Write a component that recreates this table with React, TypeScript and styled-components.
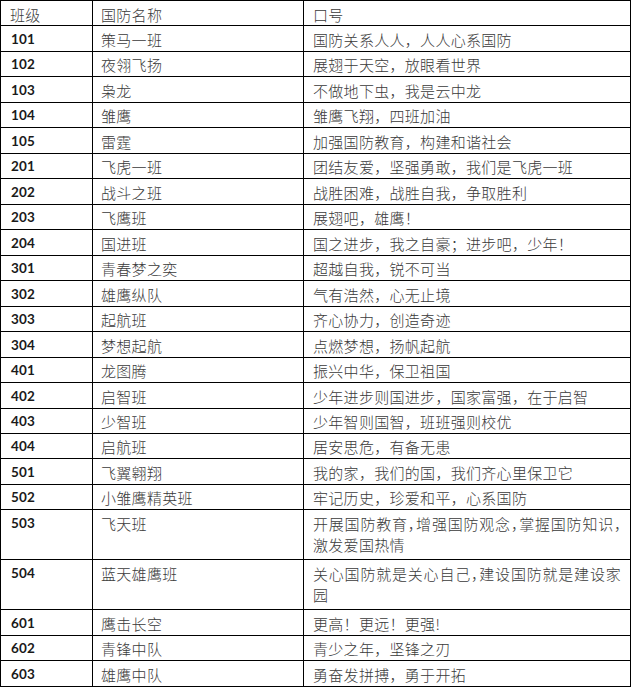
import React from "react";
import styled, { createGlobalStyle } from "styled-components";

const GlobalStyle = createGlobalStyle`
  html, body { margin: 0; padding: 0; background: #ffffff; }
  body { font-family: "Noto Sans CJK SC", sans-serif; }
`;

type Row = { id: string; name: string; slogan: string[]; tall?: boolean };

const rows: Row[] = [
  { id: "101", name: "策马一班", slogan: ["国防关系人人，人人心系国防"] },
  { id: "102", name: "夜翎飞扬", slogan: ["展翅于天空，放眼看世界"] },
  { id: "103", name: "枭龙", slogan: ["不做地下虫，我是云中龙"] },
  { id: "104", name: "雏鹰", slogan: ["雏鹰飞翔，四班加油"] },
  { id: "105", name: "雷霆", slogan: ["加强国防教育，构建和谐社会"] },
  { id: "201", name: "飞虎一班", slogan: ["团结友爱，坚强勇敢，我们是飞虎一班"] },
  { id: "202", name: "战斗之班", slogan: ["战胜困难，战胜自我，争取胜利"] },
  { id: "203", name: "飞鹰班", slogan: ["展翅吧，雄鹰！"] },
  { id: "204", name: "国进班", slogan: ["国之进步，我之自豪；进步吧，少年！"] },
  { id: "301", name: "青春梦之奕", slogan: ["超越自我，锐不可当"] },
  { id: "302", name: "雄鹰纵队", slogan: ["气有浩然，心无止境"] },
  { id: "303", name: "起航班", slogan: ["齐心协力，创造奇迹"] },
  { id: "304", name: "梦想起航", slogan: ["点燃梦想，扬帆起航"] },
  { id: "401", name: "龙图腾", slogan: ["振兴中华，保卫祖国"] },
  { id: "402", name: "启智班", slogan: ["少年进步则国进步，国家富强，在于启智"] },
  { id: "403", name: "少智班", slogan: ["少年智则国智，班班强则校优"] },
  { id: "404", name: "启航班", slogan: ["居安思危，有备无患"] },
  { id: "501", name: "飞翼翱翔", slogan: ["我的家，我们的国，我们齐心里保卫它"] },
  { id: "502", name: "小雏鹰精英班", slogan: ["牢记历史，珍爱和平，心系国防"] },
  {
    id: "503",
    name: "飞天班",
    slogan: ["开展国防教育，增强国防观念，掌握国防知识，", "激发爱国热情"],
    tall: true,
  },
  {
    id: "504",
    name: "蓝天雄鹰班",
    slogan: ["关心国防就是关心自己，建设国防就是建设家", "园"],
    tall: true,
  },
  { id: "601", name: "鹰击长空", slogan: ["更高！更远！更强!"] },
  { id: "602", name: "青锋中队", slogan: ["青少之年，坚锋之刃"] },
  { id: "603", name: "雄鹰中队", slogan: ["勇奋发拼搏，勇于开拓"] },
];

const Table = styled.table`
  border-collapse: collapse;
  table-layout: fixed;
  width: 630px;
  margin: 0;
`;

const Col = styled.col<{ $w: number }>`
  width: ${(p) => p.$w}px;
`;

const Tr = styled.tr<{ $tall?: boolean }>`
  height: ${(p) => (p.$tall ? 50 : 25.48)}px;
`;

const Cell = styled.td`
  border: 1px solid #000;
  padding: 2.5px 4px 0 9px;
  vertical-align: top;
  font-family: "Noto Sans CJK SC", sans-serif;
  font-weight: 300;
  font-size: 15px;
  line-height: 21px;
  letter-spacing: 0.3px;
  color: #3a3a3a;
  white-space: nowrap;
  overflow: hidden;
`;

const NameCell = styled(Cell)`
  padding-left: 8px;
`;

const IdCell = styled(Cell)`
  font-family: Lato, "Open Sans", sans-serif;
  font-weight: 700;
  font-size: 13.5px;
  letter-spacing: 0.2px;
  color: #1a1a1a;
  padding-left: 10px;
`;

const Line = styled.div<{ $tight?: boolean }>`
  ${(p) =>
    p.$tight
      ? `font-feature-settings: "halt"; letter-spacing: 0.8px;`
      : ``}
`;

export default function App() {
  return (
    <>
      <GlobalStyle />
      <Table>
        <colgroup>
          <Col $w={92} />
          <Col $w={211} />
          <Col $w={327} />
        </colgroup>
        <tbody>
          <Tr>
            <Cell>班级</Cell>
            <NameCell>国防名称</NameCell>
            <Cell>口号</Cell>
          </Tr>
          {rows.map((r) => (
            <Tr key={r.id} $tall={r.tall}>
              <IdCell>{r.id}</IdCell>
              <NameCell>{r.name}</NameCell>
              <Cell>
                {r.slogan.map((s, i) => (
                  <Line key={i} $tight={r.tall && i === 0}>
                    {s}
                  </Line>
                ))}
              </Cell>
            </Tr>
          ))}
        </tbody>
      </Table>
    </>
  );
}
